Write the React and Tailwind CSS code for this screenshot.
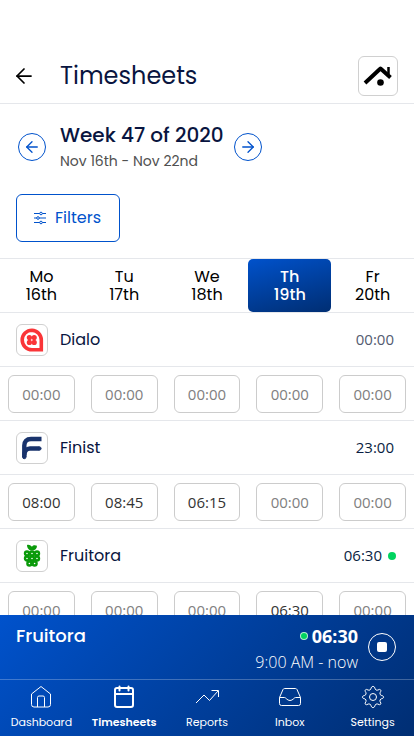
import { ArrowLeft, ArrowRight } from 'lucide-react'

const days = [
  { name: 'Mo', date: '16th' },
  { name: 'Tu', date: '17th' },
  { name: 'We', date: '18th' },
  { name: 'Th', date: '19th', active: true },
  { name: 'Fr', date: '20th' },
]

const projects = [
  { name: 'Dialo', total: '00:00', Logo: DialoLogo, times: ['', '', '', '', ''] },
  { name: 'Finist', total: '23:00', Logo: FinistLogo, times: ['08:00', '08:45', '06:15', '', ''] },
  { name: 'Fruitora', total: '06:30', Logo: FruitoraLogo, running: true, times: ['', '', '', '06:30', ''] },
]

const tabs = [
  { label: 'Dashboard', Icon: HomeIcon },
  { label: 'Timesheets', Icon: CalendarIcon, active: true },
  { label: 'Reports', Icon: ReportsIcon },
  { label: 'Inbox', Icon: InboxIcon },
  { label: 'Settings', Icon: SettingsIcon },
]

function RoofLogo() {
  return (
    <svg viewBox="0 0 32 32" className="w-8 h-8 shrink-0" fill="none" stroke="#000" aria-hidden="true">
      <path d="M3 23 18.5 8.5 28.5 17.5" strokeWidth="4" strokeLinejoin="round" />
      <path d="M26.5 7v7" strokeWidth="2.5" />
      <circle cx="18.5" cy="22.5" r="3.3" fill="#000" stroke="none" />
    </svg>
  )
}

function DialoLogo() {
  return (
    <svg viewBox="0 0 24 24" className="w-6 h-6" aria-hidden="true">
      <path
        d="M12 2.2A9.8 9.8 0 0 0 12 21.8H21.3V12A9.5 9.8 0 0 0 12 2.2Z"
        fill="none"
        stroke="#fa3538"
        strokeWidth="3.6"
      />
      <g fill="#fa3538">
        <circle cx="9.4" cy="9.6" r="2.6" />
        <circle cx="14.2" cy="9.6" r="2.6" />
        <circle cx="9.4" cy="14.4" r="2.6" />
        <circle cx="14.2" cy="14.4" r="2.6" />
      </g>
    </svg>
  )
}

function FinistLogo() {
  return (
    <svg viewBox="0 0 24 24" className="w-6 h-6" fill="none" stroke="#19336c" strokeWidth="4.4" aria-hidden="true">
      <path d="M21.5 3H11C6.5 3 4.3 5.5 4.3 9.5V21" />
      <circle cx="4.3" cy="21" r="1.7" fill="#19336c" strokeWidth="1" />
      <path d="M4.3 19.5C4.3 15 6.5 12.5 10 12.5h9.5" />
      <circle cx="19.5" cy="12.5" r="1.6" fill="#19336c" strokeWidth="1" />
    </svg>
  )
}

function FruitoraLogo() {
  return (
    <svg viewBox="0 0 24 24" className="w-6 h-6" aria-hidden="true">
      <path d="M7 1c1.5-.8 3.5 0 5 1.7C13 1.2 15 .8 17 1.8c0 3-2 4.7-5 4.7-2.8 0-5-2-5-5.500Z" fill="#0a9a0a" />
      <g fill="#fff" stroke="#0a9a0a" strokeWidth="2.4">
        <circle cx="7" cy="9.5" r="2" />
        <circle cx="12" cy="9.5" r="2" />
        <circle cx="17" cy="9.5" r="2" />
        <circle cx="7" cy="14.5" r="2" />
        <circle cx="12" cy="14.5" r="2" />
        <circle cx="17" cy="14.5" r="2" />
        <circle cx="9.4" cy="19.5" r="2" />
        <circle cx="14.6" cy="19.5" r="2" />
      </g>
    </svg>
  )
}

function FilterIcon() {
  return (
    <svg viewBox="0 0 14 14" className="w-3.5 h-3.5" fill="none" stroke="currentColor" aria-hidden="true">
      <path d="M1 2.5h12M1 7h12M1 11.5h12" strokeWidth="1.2" />
      <g fill="#fff">
        <circle cx="8" cy="2.5" r="1.3" />
        <circle cx="5" cy="7" r="1.3" />
        <circle cx="8" cy="11.5" r="1.3" />
      </g>
    </svg>
  )
}

function HomeIcon() {
  return (
    <svg viewBox="0 0 24 24" className="w-6 h-6" fill="none" stroke="currentColor" strokeLinejoin="round" aria-hidden="true">
      <path d="M2.5 9 12 1.5 21.5 9v10.5a2.5 2.5 0 0 1-2.5 2.5H5a2.5 2.5 0 0 1-2.5-2.5Z" />
      <path d="M8.5 22V12.5a1.5 1.5 0 0 1 1.5-1.5h4a1.5 1.5 0 0 1 1.5 1.5V22" />
    </svg>
  )
}

function CalendarIcon() {
  return (
    <svg viewBox="0 0 24 24" className="w-6 h-6" fill="none" stroke="currentColor" strokeWidth="2" strokeLinecap="round" aria-hidden="true">
      <rect x="3" y="3" width="18" height="19" rx="2" />
      <path d="M3 9h18M7.5 1.5v4M16.5 1.5v4" />
    </svg>
  )
}

function ReportsIcon() {
  return (
    <svg viewBox="0 0 24 24" className="w-6 h-6" fill="none" stroke="currentColor" aria-hidden="true">
      <path d="M1 18 9 10l5.5 5.5L23 6M16.5 5.5h7V12" />
    </svg>
  )
}

function InboxIcon() {
  return (
    <svg viewBox="0 0 24 24" className="w-6 h-6" fill="none" stroke="currentColor" strokeLinejoin="round" aria-hidden="true">
      <path d="M1.5 12.5 5 4.5C5.3 3.8 6 3.5 6.7 3.5h10.6c.7 0 1.4.3 1.7 1l3.5 8v6a2 2 0 0 1-2 2h-17a2 2 0 0 1-2-2Z" />
      <path d="M1.5 12.5h5c1.5 0 2.5 3 5.5 3s4-3 5.5-3h5" />
    </svg>
  )
}

function SettingsIcon() {
  return (
    <svg viewBox="0 0 24 24" className="w-6 h-6" fill="none" stroke="currentColor" strokeLinejoin="round" aria-hidden="true">
      <path d="m10.5 2.2-.7 1.7a2 2 0 0 1-2.6 1.2l-1.7-.7c-1 0-1.7.9-1.3 1.900l.8 1.500a2 2 0 0 1-1.200 2.500l-1.700.7c-1 .5-1 1.800 0 2.200l1.700.7A2 2 0 0 1 5 16.400l-.8 1.600c-.3 1.100.5 1.900 1.500 1.700l1.600-.7a2 2 0 0 1 2.500 1.200l.7 1.600c.5 1 2.500 1 3 0l.7-1.600a2 2 0 0 1 2.500-1.200l1.600.7c1 .2 1.800-.6 1.500-1.700l-.8-1.600a2 2 0 0 1 1.200-2.500l1.700-.7c1-.4 1-1.700 0-2.200l-1.700-.7A2 2 0 0 1 19 7.800l.8-1.500c.4-1-.3-1.900-1.300-1.900l-1.700.7a2 2 0 0 1-2.600-1.200l-.7-1.700c-.5-1-2.500-1-3 0Z" />
      <circle cx="12" cy="12" r="3.5" />
    </svg>
  )
}

function ProjectRow({ project }) {
  const { name, total, Logo, running, times } = project

  return (
    <section>
      <div className="flex items-center h-[54px] pl-4 pr-[18px] border-b border-gray-200">
        <div className="w-8 h-8 flex items-center justify-center border border-[#d0d0d0] rounded-md">
          <Logo />
        </div>
        <h2 className="flex-1 ml-3 text-base text-[#091540]">{name}</h2>
        <div className="flex items-center gap-1.5">
          <span
            className={`font-['Open_Sans',sans-serif] text-[15px] font-medium ${
              total === '00:00' ? 'text-[#535b70]' : 'text-[#091e42]'
            } ${running ? '' : 'mr-0.5'}`}
          >
            {total}
          </span>
          {running && <span className="w-2 h-2 rounded-full bg-[#00d45f]" />}
        </div>
      </div>
      <div className="grid grid-cols-5 border-b border-gray-200">
        {times.map((time, i) => (
          <div key={days[i].name} className="px-2 pt-2 pb-[7px]">
            <input
              type="text"
              aria-label={`${name} ${days[i].name} ${days[i].date}`}
              placeholder="00:00"
              defaultValue={time}
              className="block w-full h-[38px] border border-[#cccccc] rounded-md text-center font-['Open_Sans',sans-serif] text-[15px] text-[#333333] placeholder:text-[#808080]"
            />
          </div>
        ))}
      </div>
    </section>
  )
}

export default function App() {
  return (
    <div className="h-screen flex flex-col bg-white font-['Poppins','Inter',sans-serif]">
      <header className="flex items-center h-[104px] pt-12 px-4 border-b border-gray-200 shrink-0">
        <button type="button" aria-label="Back" className="w-4 flex justify-center">
          <ArrowLeft size={24} strokeWidth={1.75} className="shrink-0" />
        </button>
        <h1 className="flex-1 ml-7 text-2xl text-[#091540]">Timesheets</h1>
        <button
          type="button"
          aria-label="Company"
          className="w-10 h-10 flex items-center justify-center border border-[#d0d0d0] rounded-md"
        >
          <RoofLogo />
        </button>
      </header>

      <main className="flex-1 min-h-0 overflow-y-auto [scrollbar-width:none]">
        <div className="flex items-center pt-[17px] px-[18px]">
          <button
            type="button"
            aria-label="Previous week"
            className="w-7 h-7 flex items-center justify-center rounded-full border border-[#0052cc] text-[#0052cc]"
          >
            <ArrowLeft size={18} strokeWidth={1.75} />
          </button>
          <div className="ml-3.5 mr-2.5">
            <p className="text-xl leading-7 font-medium text-[#091540]">Week 47 of 2020</p>
            <p className="text-sm leading-6 text-[#505050]">Nov 16th - Nov 22nd</p>
          </div>
          <button
            type="button"
            aria-label="Next week"
            className="w-7 h-7 flex items-center justify-center rounded-full border border-[#0052cc] text-[#0052cc]"
          >
            <ArrowRight size={18} strokeWidth={1.75} />
          </button>
        </div>

        <div className="px-4 pt-[21px] pb-4">
          <button
            type="button"
            className="flex items-center gap-2 h-12 pl-4 pr-[18px] border border-[#0052cc] rounded-md text-base text-[#0052cc]"
          >
            <FilterIcon />
            Filters
          </button>
        </div>

        <div className="grid grid-cols-5 border-y border-gray-200">
          {days.map(day => (
            <button
              key={day.name}
              type="button"
              className={`h-[53px] text-base leading-[18px] rounded-[5px] ${
                day.active ? 'bg-linear-165 from-[#0052cc] to-[#002e73] text-white font-medium' : 'text-black'
              }`}
            >
              {day.name}
              <br />
              {day.date}
            </button>
          ))}
        </div>

        {projects.map(project => (
          <ProjectRow key={project.name} project={project} />
        ))}
      </main>

      <footer className="shrink-0 bg-linear-135 from-[#0052cc] to-[#002e73] text-white">
        <div className="flex h-16 px-4 pt-2">
          <p className="flex-1 text-lg leading-[26px] font-medium">Fruitora</p>
          <div className="text-right">
            <p className="flex items-center justify-end gap-1 leading-[26px] font-['Noto_Sans',sans-serif] text-lg font-bold">
              <span className="w-2 h-2 rounded-full border border-white/70 bg-[#00d45f]" />
              06:30
            </p>
            <p className="text-base leading-[26px] font-light font-['Open_Sans',sans-serif]">9:00 AM - now</p>
          </div>
          <button
            type="button"
            aria-label="Stop timer"
            className="w-7 h-7 mt-2.5 ml-2.5 mr-0.5 flex items-center justify-center rounded-full border border-white"
          >
            <span className="w-2.5 h-2.5 rounded-xs bg-white" />
          </button>
        </div>
        <nav className="grid grid-cols-5 h-[57px] border-t border-white/25">
          {tabs.map(({ label, Icon, active }) => (
            <a
              key={label}
              href={`#${label.toLowerCase()}`}
              className={`flex flex-col items-center gap-[5px] pt-[5px] text-[11px] leading-4 ${active ? 'font-semibold' : ''}`}
            >
              <Icon />
              {label}
            </a>
          ))}
        </nav>
      </footer>
    </div>
  )
}
